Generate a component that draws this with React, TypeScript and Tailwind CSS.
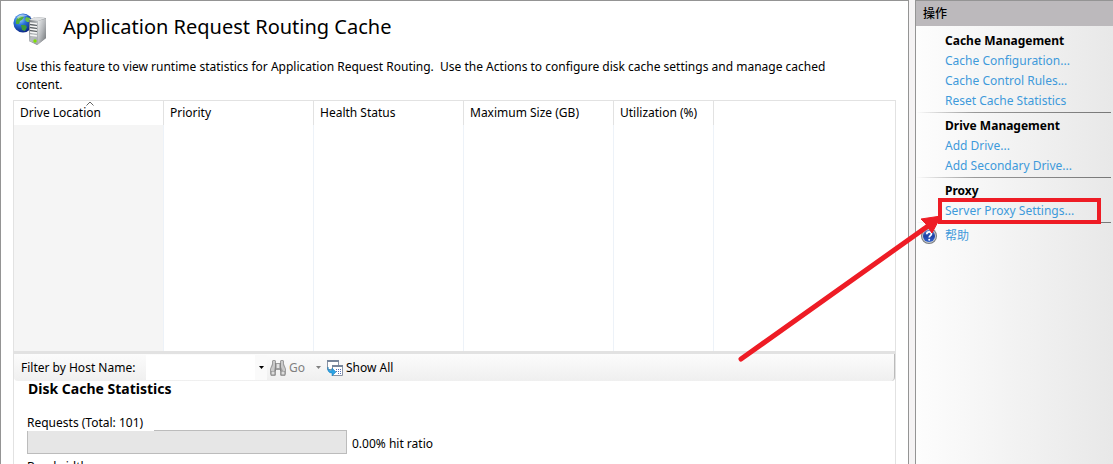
import React from "react";

const columns = [
  { name: "Drive Location", width: "w-[150px]", sorted: true },
  { name: "Priority", width: "w-[150px]" },
  { name: "Health Status", width: "w-[150px]" },
  { name: "Maximum Size (GB)", width: "w-[150px]" },
  { name: "Utilization (%)", width: "w-[100px]" },
];

const groups = [
  {
    title: "Cache Management",
    links: ["Cache Configuration...", "Cache Control Rules...", "Reset Cache Statistics"],
  },
  { title: "Drive Management", links: ["Add Drive...", "Add Secondary Drive..."] },
  { title: "Proxy", links: ["Server Proxy Settings..."] },
];

function ServerIcon() {
  return (
    <svg className="h-8 w-9 shrink-0" viewBox="0 0 36 32" aria-hidden="true">
      <defs>
        <radialGradient id="globe" cx="0.35" cy="0.3" r="0.75">
          <stop offset="0" stopColor="#a9dcfa" />
          <stop offset="0.4" stopColor="#2b74dc" />
          <stop offset="1" stopColor="#08207e" />
        </radialGradient>
        <linearGradient id="front" x1="0" y1="0" x2="1" y2="1">
          <stop offset="0" stopColor="#6d7176" />
          <stop offset="0.5" stopColor="#b9bdc0" />
          <stop offset="1" stopColor="#a6aaad" />
        </linearGradient>
        <linearGradient id="side" x1="0" y1="0" x2="1" y2="1">
          <stop offset="0" stopColor="#eceeef" />
          <stop offset="0.5" stopColor="#b4b7ba" />
          <stop offset="1" stopColor="#6c7073" />
        </linearGradient>
      </defs>
      <circle cx="10" cy="10" r="9.6" fill="url(#globe)" />
      <path d="M3 8 Q4 4 8 3 L11 4 L9 7 L7 8 L6 11 L3 11 Z" fill="#4fae3c" />
      <path d="M8 12 L12 12 L14 14 L12 18 L9 17 Z" fill="#3f9a3a" />
      <path d="M13 4 L17 5 L18 9 L14 9 L12 7 Z" fill="#6cc04a" />
      <path d="M4 4 Q9 -1 15 3 Q9 3 5 6 Z" fill="#fff" opacity="0.45" />
      <path d="M16 7 L22 4 L33 5 L33 25 L24 32 L16 28 Z" fill="#85898c" />
      <path d="M16 7 L25 8 L25 31.500 L16 28 Z" fill="url(#front)" />
      <path d="M25 8 L33 5.500 L33 25 L25 31.500 Z" fill="url(#side)" />
      <path d="M16 7 L22 4 L33 5 L25 8 Z" fill="#dfe1e3" />
      <path d="M17 10l7 1M17 13l7 1M17 16l7 1M17 19l7 1M17 22l7 1" stroke="#f6f6f6" strokeWidth="1.300" />
      <path d="M17 11.500l7 1M17 14.500l7 1M17 17.500l7 1" stroke="#4f5357" strokeWidth="0.900" />
      <circle cx="22" cy="28" r="1.700" fill="#7ee000" />
    </svg>
  );
}

function BinocularsIcon() {
  return (
    <svg className="size-4 shrink-0" viewBox="0 0 16 16" aria-hidden="true">
      <path d="M2 1l1-1h2l1 1v2h4V1l1-1h2l1 1v3l2 5v5l-1 2h-4l-1-1v-5H6v5l-1 1H1l-1-2V9l2-5z" fill="#9c9c9c" />
      <path d="M3 1h2v5l-1 5H1V9l2-4zM11 1h2v4l2 4v2h-2l-2-4z" fill="#c9c9c9" />
      <path d="M6 4h4v4H6z" fill="#b5b5b5" />
      <path d="M7 4h2v4H7z" fill="#e2e2e2" />
      <circle cx="3" cy="13" r="1.500" fill="#dcdcdc" />
      <circle cx="13" cy="13" r="1.500" fill="#dcdcdc" />
      <path d="M5.500 3v8M10.500 3v8" stroke="#858585" />
    </svg>
  );
}

function ShowAllIcon() {
  return (
    <svg className="size-4 shrink-0" viewBox="0 0 16 16" aria-hidden="true">
      <path d="M.5.5h11v9H.5z" fill="#fff" stroke="#8a94a5" />
      <path d="M0 0h12v2H0z" fill="#78869b" />
      <path d="M5.500 5.500h10v10h-10z" fill="#fff" stroke="#8a94a5" />
      <path d="M5 5h11v2H5z" fill="#78869b" />
      <path d="M9 9h1v1H9zM11 9h1v1h-1zM13 9h1v1h-1zM9 11h1v1H9zM11 11h1v1h-1zM13 11h1v1h-1zM11 13h1v1h-1zM13 13h1v1h-1z" fill="#5570b8" />
      <path d="M1 7c0 3 2 3.500 4 3.500V8l4 4-4 4v-3c-3 0-5-2-4-6z" fill="#2ba3e4" stroke="#1778b6" strokeWidth="0.5" />
    </svg>
  );
}

function HelpIcon() {
  return (
    <svg className="size-4 shrink-0" viewBox="0 0 16 16" aria-hidden="true">
      <defs>
        <linearGradient id="help" x1="0" y1="0" x2="0" y2="1">
          <stop offset="0" stopColor="#5f83cf" />
          <stop offset="0.5" stopColor="#1c3fa5" />
          <stop offset="1" stopColor="#2f62cf" />
        </linearGradient>
      </defs>
      <circle cx="8" cy="8" r="8" fill="#777b80" />
      <circle cx="8" cy="8" r="7" fill="#c5c9ce" />
      <circle cx="8" cy="8" r="6" fill="url(#help)" />
      <path d="M5.800 6.200c0-3 4.600-3 4.600-.3 0 1.600-2.200 1.700-2.200 3.600" fill="none" stroke="#fff" strokeWidth="1.700" />
      <circle cx="8.200" cy="11.700" r="1" fill="#fff" />
    </svg>
  );
}

function Caret({ className }: { className: string }) {
  return (
    <svg className={className} viewBox="0 0 5 3" aria-hidden="true">
      <path d="M0 0h5L2.500 3z" fill="currentColor" />
    </svg>
  );
}

function Separator() {
  return <div className="mt-px mr-0.5 mb-[3px] h-px bg-linear-to-r from-transparent via-[#999] via-30% to-[#777]" />;
}

function Callout() {
  return (
    <>
      <span className="pointer-events-none absolute -inset-y-[3px] right-3 left-[22px] z-10 border-4 border-[#ee1c25]" />
      <svg
        className="pointer-events-none absolute top-3 right-[170px] z-10 h-[152px] w-[206px]"
        viewBox="0 0 206 152"
        aria-hidden="true"
      >
        <path d="M4 146 L191 13" stroke="#ee1c25" strokeWidth="5" strokeLinecap="round" />
        <path d="M204 3 L184 6 L189 11 L195 20 Z" fill="#ee1c25" stroke="#ee1c25" strokeLinejoin="round" />
      </svg>
    </>
  );
}

function DriveTable() {
  return (
    <table className="h-[250px] w-full table-fixed border-separate border-spacing-0">
      <thead>
        <tr className="h-6">
          {columns.map((c) => (
            <th key={c.name} className={`${c.width} relative border-r border-[#e2e2e2] px-1.5 text-left font-normal`}>
              {c.sorted && (
                <svg className="absolute top-0 left-[72px] h-[5px] w-2" viewBox="0 0 8 5" aria-hidden="true">
                  <path d="M.5 4.500 4 1l3.500 3.500" fill="none" stroke="#666" />
                </svg>
              )}
              {c.name}
            </th>
          ))}
          <td />
        </tr>
      </thead>
      <tbody>
        <tr>
          {columns.map((c) => (
            <td key={c.name} className={`border-r border-[#edf2f8] ${c.sorted ? "bg-[#f5f5f5]" : ""}`} />
          ))}
          <td />
        </tr>
      </tbody>
    </table>
  );
}

function FilterBar() {
  return (
    <div className="flex h-[27px] items-center rounded-b border-r border-[#bbb] bg-linear-to-b from-[#fcfcfc] to-[#efefef] pl-[7px]">
      <label htmlFor="host" className="w-[125px] shrink-0">
        Filter by Host Name:
      </label>
      <input id="host" className="h-[25px] w-[109px] bg-white px-1 outline-none" />
      <button aria-label="Host names" className="flex h-[25px] w-3 items-center justify-center bg-[#fafafa]">
        <Caret className="h-[3px] w-[5px]" />
      </button>
      <button className="ml-[3px] flex items-center gap-[3px] text-[#808080]">
        <BinocularsIcon />
        Go
      </button>
      <button aria-label="Go options" className="ml-2.5 flex h-4 w-[7px] items-center justify-center text-[#808080]">
        <Caret className="h-[3px] w-[5px]" />
      </button>
      <button className="ml-[5px] flex items-center gap-[3px]">
        <ShowAllIcon />
        Show All
      </button>
    </div>
  );
}

export default function App() {
  return (
    <div className="flex h-screen overflow-hidden bg-[#f5f3f4] font-['Noto_Sans','Noto_Sans_CJK_SC',sans-serif] text-xs text-black">
      <main className="flex min-w-0 flex-1 flex-col border-x border-t border-[#949494] bg-white px-3">
        <header className="flex h-[57px] shrink-0 items-start gap-3.5 pt-3">
          <ServerIcon />
          <h1 className="text-xl leading-7">Application Request Routing Cache</h1>
        </header>
        <p className="shrink-0 pr-8 pb-1.5 pl-[3px] leading-[18px]">
          Use this feature to view runtime statistics for Application Request Routing.&nbsp; Use the Actions to configure
          disk cache settings and manage cached content.
        </p>
        <div className="min-h-0 flex-1 overflow-hidden border-x border-t border-[#e2e2e2]">
          <DriveTable />
          <div className="h-[3px] bg-[#e2e2e2]" />
          <FilterBar />
          <section className="px-[13px]">
            <h2 className="pl-px text-sm leading-4 font-bold">Disk Cache Statistics</h2>
            <div className="relative mt-[18px] w-[127px] bg-white leading-4">Requests (Total: 101)</div>
            <div className="-mt-px flex items-end gap-[5px]">
              <div role="progressbar" aria-valuenow={0} className="h-6 w-80 border border-[#bcbcbc] bg-[#e6e6e6]" />
              <span className="leading-5">0.00% hit ratio</span>
            </div>
            <div className="mt-[5px] leading-4">Bandwidth</div>
          </section>
        </div>
      </main>
      <aside className="ml-1.5 w-[198px] shrink-0 border-t border-l border-[#949494] bg-linear-to-r from-[#fdfdfd] to-[#e8e8e8]">
        <h2 className="mb-[5px] h-[25px] bg-[#bcb9bc] pl-[7px] leading-[26px] font-medium">操作</h2>
        {groups.map((g) => (
          <section key={g.title}>
            <h3 className="pl-[29px] leading-5 font-bold">{g.title}</h3>
            <ul>
              {g.links.map((l) => (
                <li key={l} className="relative pl-[29px] leading-5">
                  <a href="#" className="text-[#3e9adb]">
                    {l}
                  </a>
                  {g.title === "Proxy" && <Callout />}
                </li>
              ))}
            </ul>
            <Separator />
          </section>
        ))}
        <a href="#" className="flex items-center gap-2 pl-[5px] leading-5 text-[#3e9adb]">
          <HelpIcon />
          帮助
        </a>
      </aside>
    </div>
  );
}
